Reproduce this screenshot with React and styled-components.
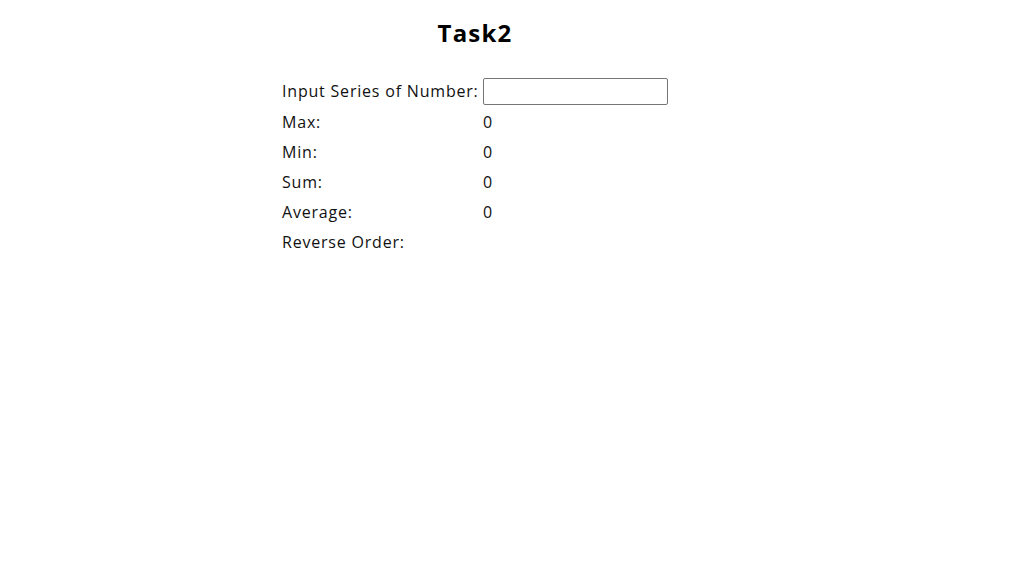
import React from "react";
import styled, { createGlobalStyle } from "styled-components";

const Global = createGlobalStyle`
  body {
    margin: 0;
    background: #fff;
    font-family: "Open Sans", "Liberation Sans", sans-serif;
    color: #111;
  }
`;

const Page = styled.div`
  padding: 16px 0 0 274px;
`;

const Box = styled.div`
  width: fit-content;
  display: flex;
  flex-direction: column;
  align-items: center;
`;

const Title = styled.h1`
  margin: 0 0 26px 9px;
  font-size: 24px;
  font-weight: 700;
  letter-spacing: 1.2px;
  color: #000;
  line-height: 34px;
`;

const Grid = styled.div`
  display: grid;
  grid-template-columns: 200px 185px;
  align-self: stretch;
  padding-left: 8px;
`;

const Label = styled.div`
  font-size: 16px;
  letter-spacing: 0.8px;
  line-height: 30px;
  white-space: nowrap;
  height: ${(p) => (p.first ? "31px" : "30px")};
`;

const Value = styled.div`
  font-size: 16px;
  line-height: 30px;
  padding-left: 1px;
  height: ${(p) => (p.first ? "31px" : "30px")};
`;

const Input = styled.input`
  box-sizing: border-box;
  width: 185px;
  height: 27px;
  margin-top: 2px;
  border: 1px solid #767676;
  border-radius: 2px;
  font: inherit;
  padding: 0 4px;
`;

class App extends React.Component {
  state = { serie: "" };

  mudaSerie = (event) => {
    this.setState({ serie: event.target.value });
  };

  render() {
    const nums = this.state.serie
      .split(/[\s,]+/)
      .filter((n) => n !== "")
      .map(Number)
      .filter((n) => !isNaN(n));
    const max = nums.length ? Math.max(...nums) : 0;
    const min = nums.length ? Math.min(...nums) : 0;
    const sum = nums.reduce((a, b) => a + b, 0);
    const avg = nums.length ? sum / nums.length : 0;

    return (
      <Page>
        <Global />
        <Box>
          <Title>Task2</Title>
          <Grid>
            <Label first>Input Series of Number:</Label>
            <Value first>
              <Input value={this.state.serie} onChange={this.mudaSerie} />
            </Value>
            <Label>Max:</Label>
            <Value>{max}</Value>
            <Label>Min:</Label>
            <Value>{min}</Value>
            <Label>Sum:</Label>
            <Value>{sum}</Value>
            <Label>Average:</Label>
            <Value>{avg}</Value>
            <Label>Reverse Order:</Label>
            <Value>{[...nums].reverse().join(" ")}</Value>
          </Grid>
        </Box>
      </Page>
    );
  }
}

export default App;
